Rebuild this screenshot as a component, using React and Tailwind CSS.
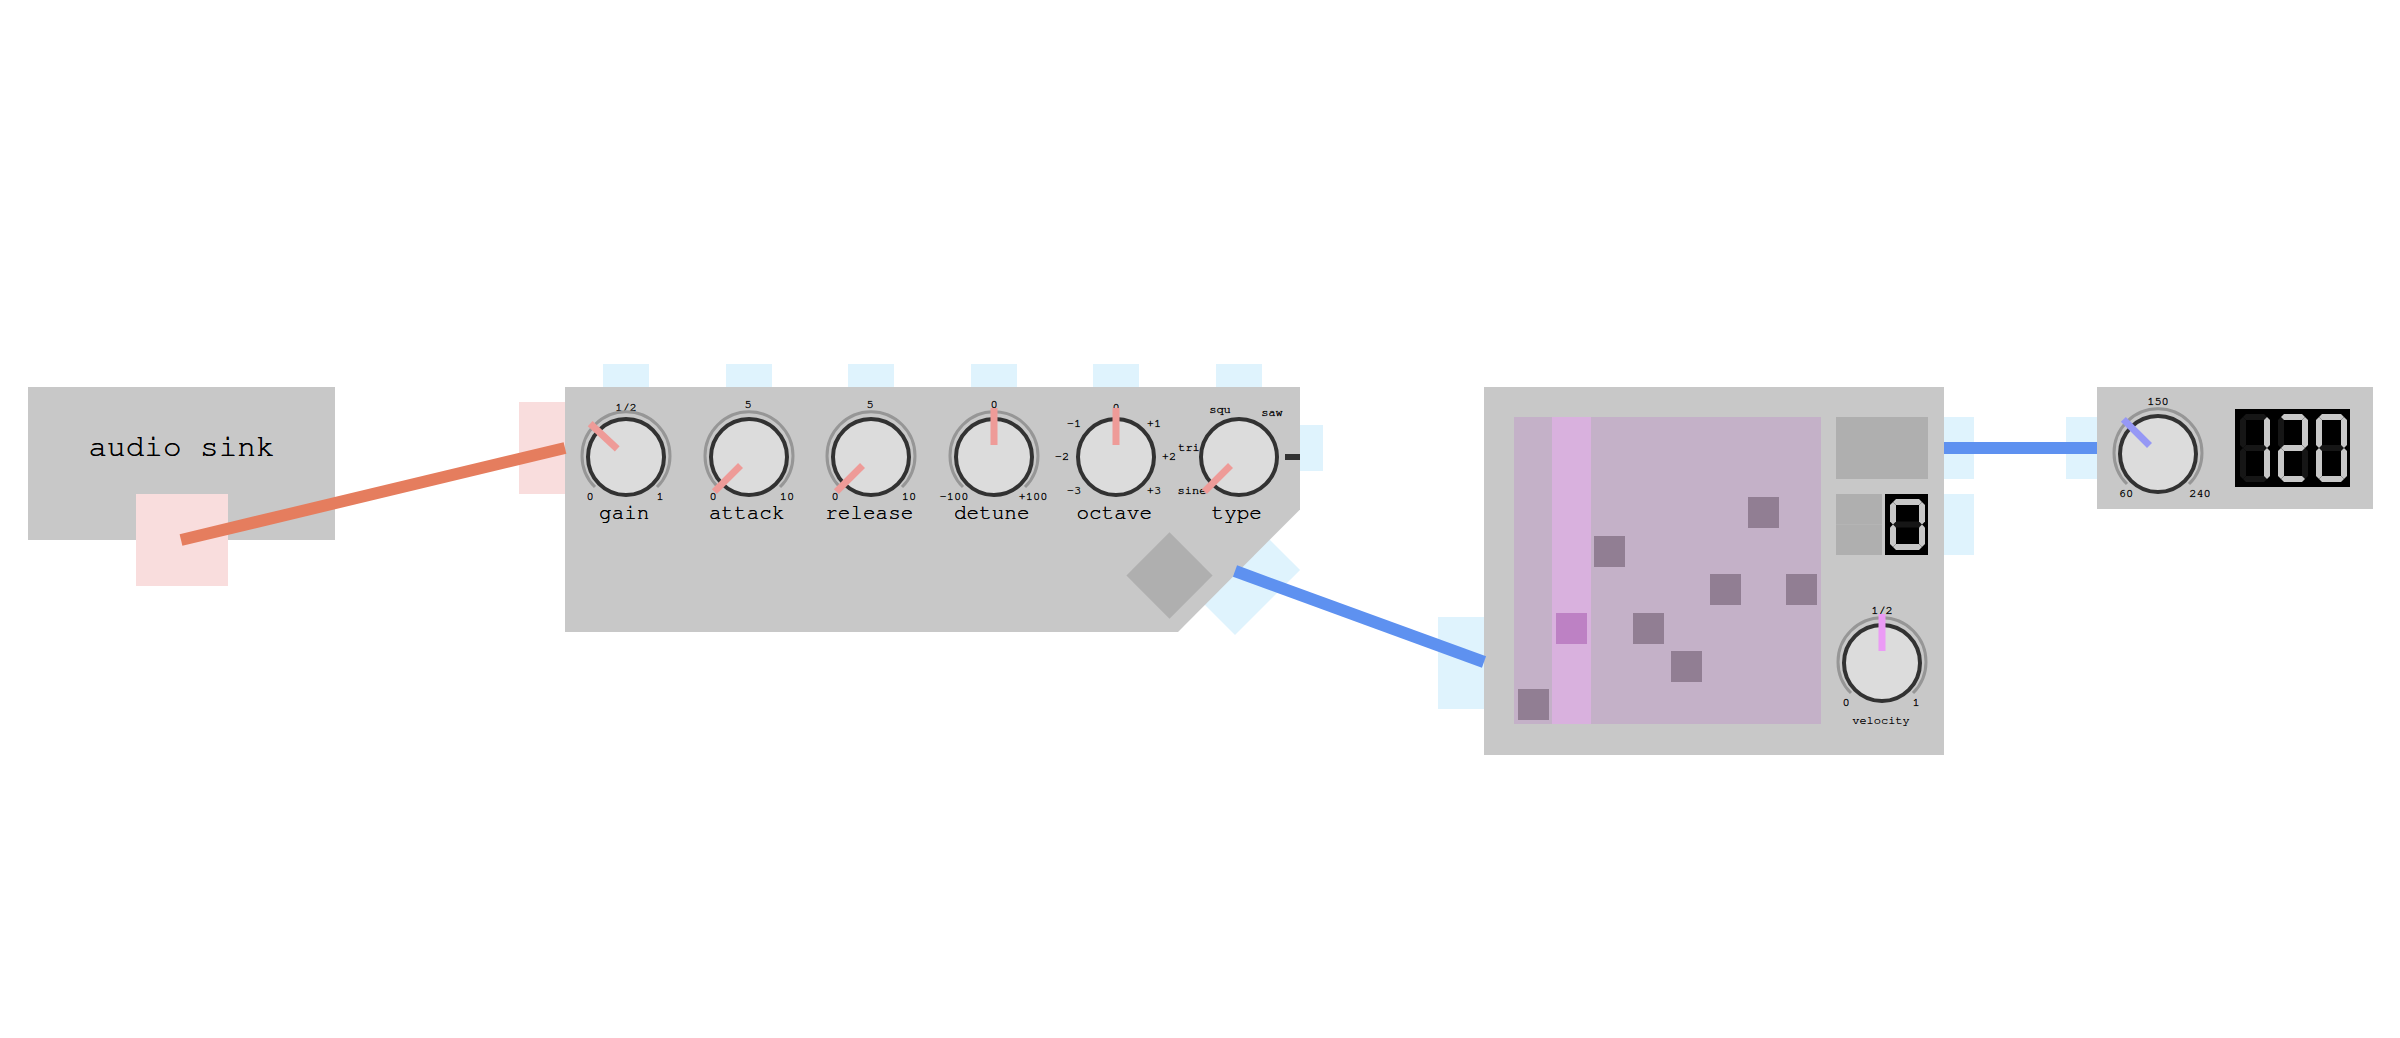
const OUT = 'bg-[#f9dddd]';
const IN = 'bg-[#dff3fd]';

/* Rotary dial: printed scale, optional track, cap and needle. Origin is the centre of the cap. */
function Dial({ name, angle, marks, track = true, tick = false, needle = 'stroke-[#ee9b98]', value, min, max }) {
  return (
    <span className="relative block h-[115px] w-[122px]">
      <svg viewBox="-61 -70 122 115" className="block h-full w-full overflow-visible" aria-hidden="true">
        <g className="fill-black stroke-black/10 text-xs" strokeWidth="1" textAnchor="middle">
          {marks.map(([text, x, y]) => (
            <text key={text} x={x} y={y}>{text}</text>
          ))}
        </g>
        {track && <path d="M-31 30 A44 44 0 1 1 31 30" className="fill-none stroke-[#969696]" strokeWidth="3" />}
        <circle r="38" className="fill-[#dcdcdc] stroke-[#323232]" strokeWidth="4" />
        {tick && <path d="M46 0H61" className="stroke-[#323232]" strokeWidth="6" />}
        <path d="M0 -12V-49" className={needle} strokeWidth="7" transform={`rotate(${angle})`} />
      </svg>
      <input
        type="range"
        aria-label={name}
        defaultValue={value}
        min={min}
        max={max}
        step="any"
        className="absolute left-0 top-6 h-[90px] w-full cursor-pointer opacity-0"
      />
    </span>
  );
}

const SEGMENTS = {
  0: 'abcdef',
  1: 'bc',
  2: 'abged',
};

/* Seven-segment digit built from pointed bars. */
function Digit({ value, w, h, className }) {
  const t = 3;
  const l = 8;
  const r = w - 6;
  const top = 8;
  const bottom = h - 8;
  const mid = h / 2;
  const across = (y) => `${l},${y} ${l + t},${y - t} ${r - t},${y - t} ${r},${y} ${r - t},${y + t} ${l + t},${y + t}`;
  const down = (x, a, b) => `${x},${a} ${x + t},${a + t} ${x + t},${b - t} ${x},${b} ${x - t},${b - t} ${x - t},${a + t}`;
  const shapes = {
    a: across(top),
    g: across(mid),
    d: across(bottom),
    f: down(l, top, mid),
    b: down(r, top, mid),
    e: down(l, mid, bottom),
    c: down(r, mid, bottom),
  };
  const lit = SEGMENTS[value];
  const order = Object.keys(shapes).sort((p, q) => lit.includes(p) - lit.includes(q));
  return (
    <svg viewBox={`0 0 ${w} ${h}`} className={className} role="img" aria-label={String(value)}>
      {order.map((k) => (
        <polygon key={k} points={shapes[k]} className={lit.includes(k) ? 'fill-[#c8c8c8]' : 'fill-[#161616]'} />
      ))}
    </svg>
  );
}

const OSC = [
  { name: 'gain', angle: -47, value: 0.33, min: 0, max: 1, marks: [['1/2', 0, -46], ['0', -36, 43], ['1', 34, 43]] },
  { name: 'attack', angle: -135, value: 0, min: 0, max: 10, marks: [['5', -1, -49], ['0', -36, 43], ['10', 38, 43]] },
  { name: 'release', angle: -135, value: 0, min: 0, max: 10, marks: [['5', -1, -49], ['0', -36, 43], ['10', 38, 43]] },
  { name: 'detune', angle: 0, value: 0, min: -100, max: 100, marks: [['0', 0, -49], ['-100', -40, 43], ['+100', 39, 43]] },
  {
    name: 'octave', angle: 0, value: 0, min: -3, max: 3, track: false,
    marks: [['0', 0, -46], ['-1', -42, -30], ['+1', 38, -30], ['-2', -54, 3], ['+2', 53, 3], ['-3', -42, 37], ['+3', 38, 37]],
  },
  {
    name: 'type', angle: -135, value: 0, min: 0, max: 4, track: false, tick: true,
    marks: [['squ', -19, -44], ['saw', 33, -41], ['tri', -50, -6], ['sine', -47, 37]],
  },
];

function AudioSink() {
  return (
    <section className="absolute left-[28px] top-[387px] h-[153px] w-[307px] bg-[#c8c8c8]">
      <h2 className="pt-[42px] text-center text-[31px] leading-9">audio sink</h2>
      <button aria-label="audio in" className={`absolute left-[108px] top-[107px] size-[92px] ${OUT}`} />
    </section>
  );
}

function Oscillator() {
  return (
    <section className="absolute left-[565px] top-[387px] w-[735px]">
      <button aria-label="audio out" className={`absolute -left-[46px] top-[15px] h-[92px] w-[46px] ${OUT}`} />
      <button aria-label="type in" className={`absolute -right-[23px] top-[38px] h-[46px] w-[23px] ${IN}`} />
      <button aria-label="note in" className={`absolute left-[624px] top-[137px] size-[92px] rotate-45 ${IN}`} />
      <div className="relative h-[245px] bg-[#c8c8c8] [clip-path:polygon(0_0,100%_0,100%_50%,calc(100%-122px)_100%,0_100%)]">
        <button aria-label="trigger" className="absolute left-[574px] top-[158px] size-[61px] rotate-45 bg-[#afafaf]" />
      </div>
      <div className="absolute inset-x-0 top-0 grid grid-cols-6">
        {OSC.map((k) => (
          <div key={k.name} className="relative flex flex-col items-center">
            <button aria-label={`${k.name} in`} className={`absolute -top-[23px] h-[23px] w-[46px] ${IN}`} />
            <Dial {...k} />
            <span className="pr-1 text-[21px] leading-[22px]">{k.name}</span>
          </div>
        ))}
      </div>
    </section>
  );
}

const NOTES = [7, 5, 3, 5, 6, 4, 2, 4];
const PLAYING = 1;

function Sequencer() {
  return (
    <section className="absolute left-[1484px] top-[387px] flex w-[460px] gap-[15px] bg-[#c8c8c8] pb-[31px] pl-[30px] pt-[30px]">
      <button aria-label="notes out" className={`absolute -left-[46px] top-[230px] h-[92px] w-[46px] ${IN}`} />
      <button aria-label="clock in" className={`absolute -right-[30px] top-[30px] h-[62px] w-[30px] ${IN}`} />
      <button aria-label="pattern in" className={`absolute -right-[30px] top-[107px] h-[61px] w-[30px] ${IN}`} />
      <div className="grid h-[307px] w-[307px] grid-flow-col grid-cols-8 grid-rows-8">
        {NOTES.map((row, col) =>
          Array.from({ length: 8 }, (_, r) => (
            <button
              key={`${col}-${r}`}
              aria-label={`step ${col + 1}, note ${8 - r}`}
              className={`flex items-center justify-center ${col === PLAYING ? 'bg-[#d9b1de]' : 'bg-[#c4b1c8]'}`}
            >
              {r === row && <span className={`size-[31px] ${col === PLAYING ? 'bg-[#bd81c4]' : 'bg-[#917e93]'}`} />}
            </button>
          )),
        )}
      </div>
      <div className="flex h-[307px] w-[92px] flex-col items-center">
        <button aria-label="step" className="h-[62px] w-full shrink-0 bg-[#afafaf]" />
        <div className="mt-[15px] flex h-[61px] w-full shrink-0 justify-between">
          <div className="flex w-[46px] flex-col">
            <button aria-label="page up" className="flex-1 bg-[#afafaf]" />
            <button aria-label="page down" className="flex-1 border-t border-[#b4b4b4] bg-[#afafaf]" />
          </div>
          <Digit value={0} w={43} h={61} className="h-[61px] w-[43px] bg-black" />
        </div>
        <div className="mt-[38px] flex flex-col items-center">
          <Dial
            name="velocity" angle={0} value={0.5} min={0} max={1} needle="stroke-[#eb9bf5]"
            marks={[['1/2', 0, -49], ['0', -36, 43], ['1', 34, 43]]}
          />
          <span className="pr-0.5 pt-1 text-xs leading-4">velocity</span>
        </div>
      </div>
    </section>
  );
}

function Tempo() {
  return (
    <section className="absolute left-[2097px] top-[387px] flex h-[122px] w-[276px] justify-between bg-[#c8c8c8] pr-[23px]">
      <button aria-label="clock out" className={`absolute -left-[31px] top-[30px] h-[62px] w-[31px] ${IN}`} />
      <div className="-mt-[3px]">
        <Dial
          name="tempo" angle={-45} value={120} min={60} max={240} needle="stroke-[#9698f5]"
          marks={[['150', 0, -49], ['60', -32, 43], ['240', 42, 43]]}
        />
      </div>
      <div className="mt-[22px] flex h-[78px] bg-black">
        <Digit value={1} w={38} h={78} className="h-[78px] w-[38px]" />
        <Digit value={2} w={38} h={78} className="h-[78px] w-[38px]" />
        <Digit value={0} w={39} h={78} className="h-[78px] w-[39px]" />
      </div>
    </section>
  );
}

export default function App() {
  return (
    <main className="relative min-h-screen w-full overflow-hidden bg-white font-[FreeMono,'Liberation_Mono',monospace] text-black [text-shadow:0_0_0_#000]">
      <AudioSink />
      <Oscillator />
      <Sequencer />
      <Tempo />
      <svg className="pointer-events-none absolute inset-0 h-full w-full" strokeWidth="12" aria-hidden="true">
        <path d="M181 540L565 448" className="stroke-[#e57d5e]" />
        <path d="M1235 571L1484 662" className="stroke-[#5e91f0]" />
        <path d="M1944 448H2097" className="stroke-[#5e91f0]" />
      </svg>
    </main>
  );
}
